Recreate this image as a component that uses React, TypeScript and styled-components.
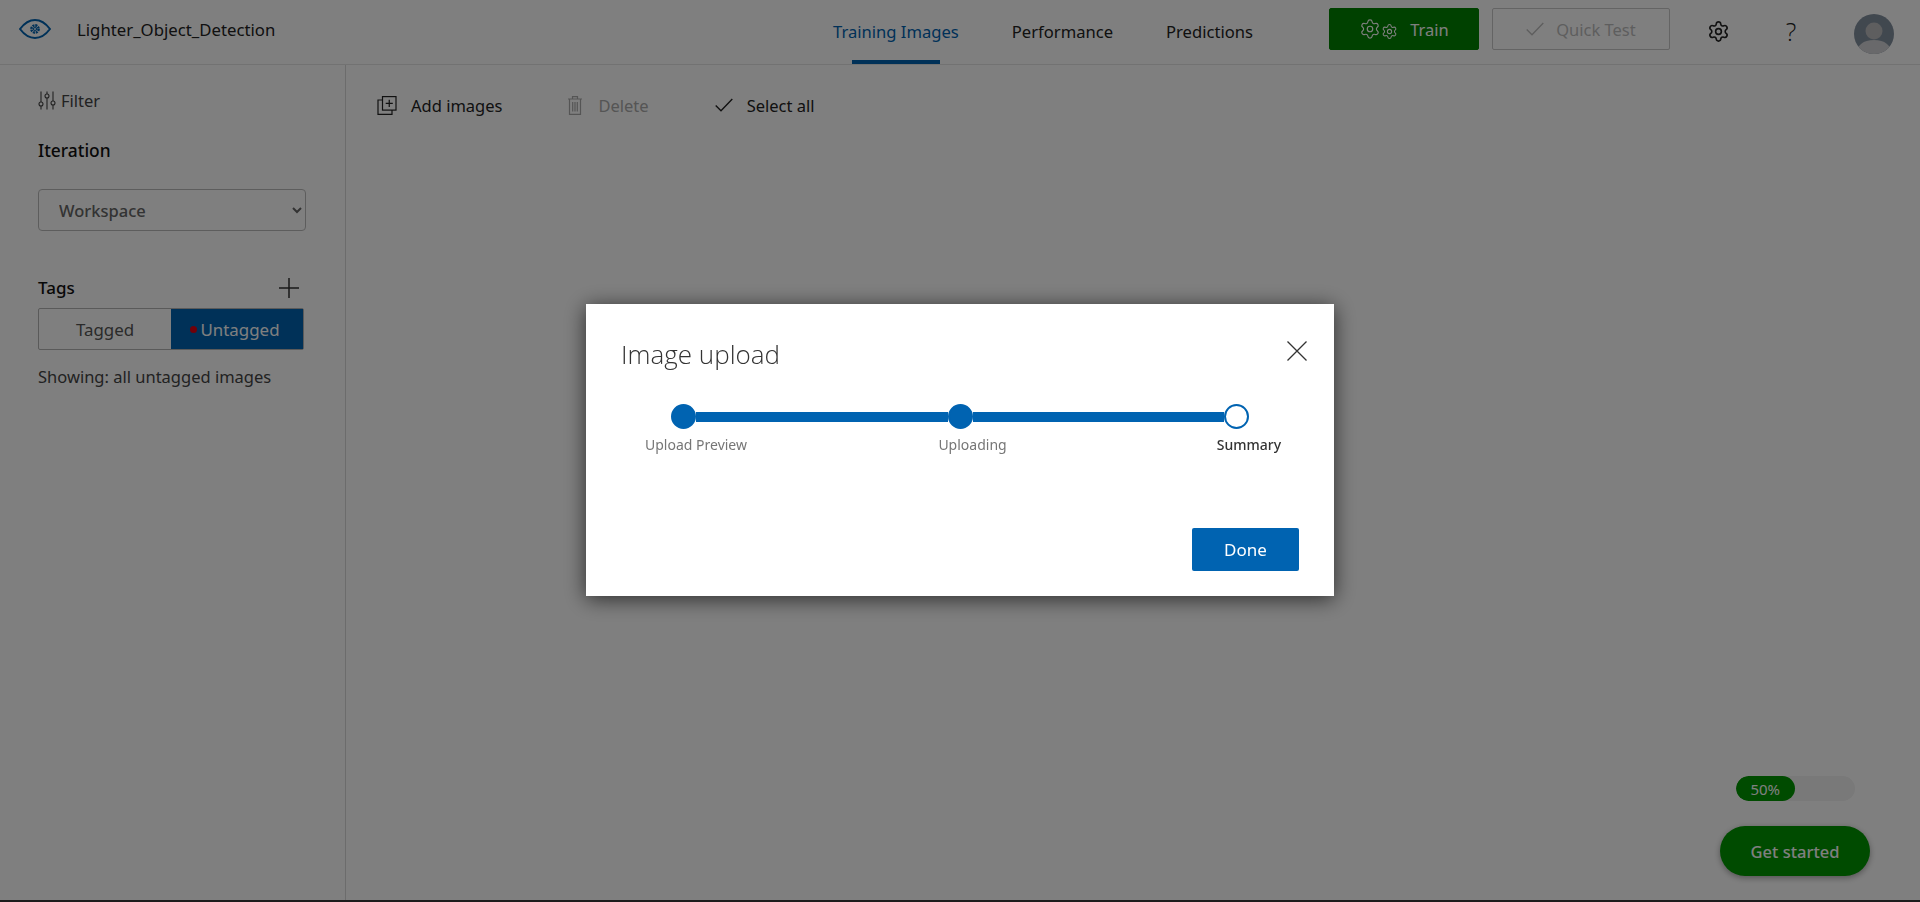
import React from 'react';
import styled, { createGlobalStyle } from 'styled-components';
import { Settings } from 'lucide-react';

const GlobalStyle = createGlobalStyle`
  html, body {
    margin: 0;
    padding: 0;
    height: 100%;
    background: #fff;
    font-family: "Noto Sans", "Open Sans", "Liberation Sans", sans-serif;
    color: #222;
    overflow: hidden;
  }
  * { box-sizing: border-box; }
`;

const BLUE = '#0063b1';
const GREEN = '#008200';
const BRIGHT_GREEN = '#009600';

const EyeLogo = () => (
  <svg width="32" height="20" viewBox="0 0 32 20" fill="none" stroke={BLUE}>
    <path d="M1 10C5.5 4 10.5 1 16 1s10.5 3 15 9c-4.5 6-9.500 9-15 9S5.500 16 1 10Z" strokeWidth="2" />
    <circle cx="16" cy="10" r="3.600" strokeWidth="2.600" strokeDasharray="2 0.800" />
    <circle cx="16" cy="10" r="1.500" strokeWidth="1.200" />
  </svg>
);

const FilterIcon = () => (
  <svg width="18" height="19" viewBox="0 0 18 19" fill="none" stroke="currentColor" strokeWidth="1.100">
    <path d="M3 0.500V11M3 15V18.500M9 0.500V3M9 7V18.500M15 0.500V10M15 14V18.500" />
    <circle cx="3" cy="13" r="2" />
    <circle cx="9" cy="5" r="2" />
    <circle cx="15" cy="12" r="2" />
  </svg>
);

const AddImagesIcon = () => (
  <svg width="20" height="19" viewBox="0 0 20 19" fill="none" stroke="currentColor" strokeWidth="1.200">
    <rect x="5.500" y="0.600" width="13.500" height="13.500" />
    <path d="M5.500 4H1V18.400H15V14.100M12.250 3.800V10.900M8.700 7.350H15.800" />
  </svg>
);

const TrashIcon = () => (
  <svg width="14" height="19" viewBox="0 0 14 19" fill="none" stroke="currentColor" strokeWidth="1.200">
    <path d="M0 3H14M4.500 3V0.700H9.500V3M1.500 3V18.400H12.500V3M4.700 6V15.500M7 6V15.500M9.300 6V15.500" />
  </svg>
);

const CheckIcon = ({ size = 18 }: { size?: number }) => (
  <svg width={size} height={size * 0.78} viewBox="0 0 18 14" fill="none" stroke="currentColor" strokeWidth="1.400">
    <path d="M0.700 7.500L6 12.800L17.300 1" />
  </svg>
);

const PlusIcon = () => (
  <svg width="20" height="20" viewBox="0 0 20 20" stroke="currentColor" strokeWidth="1.500">
    <path d="M10 0V20M0 10H20" />
  </svg>
);

const CloseIcon = () => (
  <svg width="20" height="20" viewBox="0 0 20 20" stroke="#333" strokeWidth="1.300">
    <path d="M0.500 0.500L19.500 19.500M19.500 0.500L0.500 19.500" />
  </svg>
);

const Avatar = () => (
  <svg width="40" height="40" viewBox="0 0 40 40">
    <defs>
      <clipPath id="avatar-clip">
        <circle cx="20" cy="20" r="20" />
      </clipPath>
    </defs>
    <g clipPath="url(#avatar-clip)">
      <rect width="40" height="40" fill="#83909f" />
      <circle cx="20" cy="17" r="8.500" fill="#bcbcbe" />
      <path d="M3 40c0-9 6-14 17-14s17 5 17 14Z" fill="#d2d3d6" />
    </g>
  </svg>
);

const Page = styled.div`
  height: 902px;
  display: flex;
  flex-direction: column;
  background: #fff;
`;

const Header = styled.header`
  flex: 0 0 65px;
  display: flex;
  align-items: center;
  border-bottom: 1px solid #e4e4e4;
`;

const Brand = styled.div`
  flex: 0 0 833px;
  display: flex;
  align-items: center;
  padding: 0 0 6px 19px;
`;

const ProjectName = styled.div`
  margin-left: 26px;
  font-size: 16.750px;
  color: #222;
`;

const Tabs = styled.nav`
  display: flex;
  gap: 53px;
  height: 64px;
`;

const Tab = styled.a<{ $active?: boolean }>`
  position: relative;
  display: flex;
  align-items: center;
  padding-bottom: 2px;
  font-size: 16.600px;
  color: ${p => (p.$active ? BLUE : '#222')};

  ${p =>
    p.$active &&
    `
    &::after {
      content: '';
      position: absolute;
      left: 19px;
      right: 19px;
      bottom: 0;
      height: 4px;
      background: ${BLUE};
    }
  `}
`;

const Actions = styled.div`
  display: flex;
  align-items: center;
  margin-left: 76px;
  padding-bottom: 2px;
`;

const ActionButton = styled.button<{ $primary?: boolean }>`
  height: 42px;
  display: flex;
  align-items: center;
  justify-content: center;
  gap: 12px;
  font: inherit;
  font-size: 16.500px;
  border-radius: 2px;
  border: 1px solid ${p => (p.$primary ? GREEN : '#c8c8c8')};
  background: ${p => (p.$primary ? GREEN : '#fff')};
  color: ${p => (p.$primary ? '#fff' : '#bdbdbd')};
  width: ${p => (p.$primary ? '150px' : '178px')};
  margin: -4px 13px 0 0;
`;

const GearPair = styled.span`
  display: inline-flex;
  align-items: flex-end;
  gap: 0;
`;

const IconButton = styled.div`
  display: flex;
  align-items: center;
  justify-content: center;
  width: 24px;
  color: #222;
  font-size: 25px;
  line-height: 1;
`;

const HelpButton = styled(IconButton)`
  margin-left: 48px;
  font-family: "Open Sans", sans-serif;
  font-weight: 300;
`;

const SettingsButton = styled(IconButton)`
  margin-left: 24px;
`;

const AvatarSlot = styled.div`
  display: flex;
  margin-left: 51px;
  margin-top: 5px;
`;

const Body = styled.div`
  flex: 1;
  display: flex;
  min-height: 0;
`;

const Sidebar = styled.aside`
  flex: 0 0 344px;
  border-right: 1px solid #d8d8d8;
  padding: 23px 39px 0 38px;
`;

const FilterRow = styled.div`
  display: flex;
  align-items: center;
  gap: 5px;
  height: 24px;
  font-size: 16.500px;
  color: #444;
`;

const SectionTitle = styled.div`
  font-size: 17.400px;
  line-height: 24px;
  font-weight: 500;
  color: #111;
`;

const IterationTitle = styled(SectionTitle)`
  margin-top: 26px;
`;

const IterationSelect = styled.select`
  display: block;
  width: 268px;
  height: 42px;
  margin-top: 27px;
  padding-left: 16px;
  background: #fff;
  border: 1px solid #bbb;
  border-radius: 4px;
  font: inherit;
  font-size: 16.500px;
  font-weight: 500;
  color: #666;
`;

const TagsHeader = styled.div`
  display: flex;
  justify-content: space-between;
  align-items: center;
  margin-top: 45px;
  height: 24px;
  padding-right: 7px;
  color: #333;
`;

const TagsTitle = styled(SectionTitle)`
  font-size: 17px;
`;

const TagToggle = styled.div`
  display: flex;
  width: 266px;
  height: 42px;
  margin-top: 8px;
  border: 1px solid #b4b4b4;
  border-radius: 2px;
`;

const ToggleOption = styled.div<{ $active?: boolean }>`
  flex: 1 1 50%;
  min-width: 0;
  display: flex;
  align-items: center;
  justify-content: center;
  gap: 3px;
  font-size: 16.900px;
  padding-right: ${p => (p.$active ? '4px' : '0')};
  background: ${p => (p.$active ? BLUE : 'transparent')};
  color: ${p => (p.$active ? '#fff' : '#555')};
`;

const RedDot = styled.span`
  width: 7px;
  height: 7px;
  border-radius: 50%;
  background: #e00012;
`;

const ShowingText = styled.div`
  margin-top: 15px;
  line-height: 24px;
  font-size: 16.500px;
  color: #444;
  white-space: nowrap;
`;

const Content = styled.main`
  flex: 1;
  padding: 28px 0 0 31px;
`;

const Toolbar = styled.div`
  display: flex;
  align-items: center;
  gap: 66px;
`;

const ToolbarItem = styled.div<{ $disabled?: boolean }>`
  display: flex;
  align-items: center;
  gap: ${p => (p.$disabled ? '16px' : '14px')};
  height: 24px;
  font-size: 16.500px;
  color: ${p => (p.$disabled ? '#aaa' : '#222')};
`;

const Corner = styled.div`
  position: absolute;
  right: 50px;
  bottom: 26px;
  display: flex;
  flex-direction: column;
  align-items: center;
  gap: 25px;
`;

const Progress = styled.div`
  width: 119px;
  height: 25px;
  border-radius: 13px;
  background: #f2f2f2;
  overflow: hidden;
`;

const ProgressFill = styled.div`
  height: 100%;
  display: flex;
  align-items: center;
  justify-content: center;
  border-radius: 13px;
  background: ${BRIGHT_GREEN};
  color: #fff;
  font-size: 15px;
`;

const GetStarted = styled.button`
  width: 150px;
  height: 50px;
  border: none;
  border-radius: 25px;
  background: ${BRIGHT_GREEN};
  color: #fff;
  font: inherit;
  font-size: 16.500px;
  font-weight: 500;
  box-shadow: 0 2px 6px rgba(0, 0, 0, 0.35);
`;

const BottomStrip = styled.div`
  flex: 0 0 2px;
  background: #3a3a3a;
`;

const Overlay = styled.div`
  position: fixed;
  inset: 0;
  display: flex;
  align-items: center;
  justify-content: center;
  background: rgba(0, 0, 0, 0.5);
  padding-bottom: 2px;
`;

const Dialog = styled.div`
  width: 748px;
  height: 292px;
  display: flex;
  flex-direction: column;
  background: #fff;
  box-shadow: 0 3px 20px rgba(0, 0, 0, 0.65);
`;

const DialogHeader = styled.div`
  display: flex;
  justify-content: space-between;
  align-items: center;
  padding: 32px 27px 0 35px;
`;

const DialogTitle = styled.h2`
  margin: 0;
  font-size: 26px;
  line-height: 36px;
  font-weight: 300;
  color: #333;
  font-family: "Open Sans", sans-serif;
`;

const CloseButton = styled.div`
  display: flex;
  margin-top: -6px;
`;

const StepTrack = styled.div`
  display: flex;
  align-items: center;
  width: 578px;
  margin: 32px 0 0 85px;
`;

const StepDot = styled.span<{ $current?: boolean }>`
  flex: 0 0 25px;
  height: 25px;
  border-radius: 50%;
  border: 2px solid ${BLUE};
  background: ${p => (p.$current ? '#fff' : BLUE)};
`;

const StepLine = styled.span`
  flex: 1;
  height: 10px;
  background: ${BLUE};
`;

const StepLabels = styled.div`
  display: flex;
  justify-content: space-between;
  width: 553px;
  margin: 6px 0 0 110px;
`;

const StepLabelSlot = styled.div`
  width: 0;
  display: flex;
  justify-content: center;
`;

const StepLabel = styled.span<{ $current?: boolean }>`
  flex: none;
  font-size: 14px;
  line-height: 20px;
  white-space: nowrap;
  color: ${p => (p.$current ? '#333' : '#767676')};
  font-weight: ${p => (p.$current ? 500 : 400)};
`;

const DialogFooter = styled.div`
  margin-top: auto;
  display: flex;
  justify-content: flex-end;
  padding: 0 35px 25px 0;
`;

const DoneButton = styled.button`
  width: 107px;
  height: 43px;
  border: none;
  border-radius: 2px;
  background: ${BLUE};
  color: #fff;
  font: inherit;
  font-size: 17px;
`;

const steps = [
  { label: 'Upload Preview' },
  { label: 'Uploading' },
  { label: 'Summary', current: true },
];

export default function App() {
  return (
    <>
      <GlobalStyle />
      <Page>
        <Header>
          <Brand>
            <EyeLogo />
            <ProjectName>Lighter_Object_Detection</ProjectName>
          </Brand>
          <Tabs>
            <Tab $active>Training Images</Tab>
            <Tab>Performance</Tab>
            <Tab>Predictions</Tab>
          </Tabs>
          <Actions>
            <ActionButton $primary>
              <GearPair>
                <Settings size={22} strokeWidth={1.3} />
                <Settings size={17} strokeWidth={1.5} />
              </GearPair>
              Train
            </ActionButton>
            <ActionButton>
              <CheckIcon />
              Quick Test
            </ActionButton>
            <SettingsButton>
              <Settings size={23} strokeWidth={1.7} />
            </SettingsButton>
            <HelpButton>?</HelpButton>
            <AvatarSlot>
              <Avatar />
            </AvatarSlot>
          </Actions>
        </Header>
        <Body>
          <Sidebar>
            <FilterRow>
              <FilterIcon />
              Filter
            </FilterRow>
            <IterationTitle>Iteration</IterationTitle>
            <IterationSelect defaultValue="Workspace">
              <option>Workspace</option>
            </IterationSelect>
            <TagsHeader>
              <TagsTitle>Tags</TagsTitle>
              <PlusIcon />
            </TagsHeader>
            <TagToggle>
              <ToggleOption>Tagged</ToggleOption>
              <ToggleOption $active>
                <RedDot />
                Untagged
              </ToggleOption>
            </TagToggle>
            <ShowingText>Showing: all untagged images</ShowingText>
          </Sidebar>
          <Content>
            <Toolbar>
              <ToolbarItem>
                <AddImagesIcon />
                Add images
              </ToolbarItem>
              <ToolbarItem $disabled>
                <TrashIcon />
                Delete
              </ToolbarItem>
              <ToolbarItem>
                <CheckIcon />
                Select all
              </ToolbarItem>
            </Toolbar>
          </Content>
        </Body>
        <BottomStrip />
        <Corner>
          <Progress>
            <ProgressFill style={{ width: '50%' }}>50%</ProgressFill>
          </Progress>
          <GetStarted>Get started</GetStarted>
        </Corner>
      </Page>
      <Overlay>
        <Dialog>
          <DialogHeader>
            <DialogTitle>Image upload</DialogTitle>
            <CloseButton>
              <CloseIcon />
            </CloseButton>
          </DialogHeader>
          <StepTrack>
            {steps.map((step, i) => (
              <React.Fragment key={step.label}>
                {i > 0 && <StepLine />}
                <StepDot $current={step.current} />
              </React.Fragment>
            ))}
          </StepTrack>
          <StepLabels>
            {steps.map(step => (
              <StepLabelSlot key={step.label}>
                <StepLabel $current={step.current}>{step.label}</StepLabel>
              </StepLabelSlot>
            ))}
          </StepLabels>
          <DialogFooter>
            <DoneButton>Done</DoneButton>
          </DialogFooter>
        </Dialog>
      </Overlay>
    </>
  );
}
